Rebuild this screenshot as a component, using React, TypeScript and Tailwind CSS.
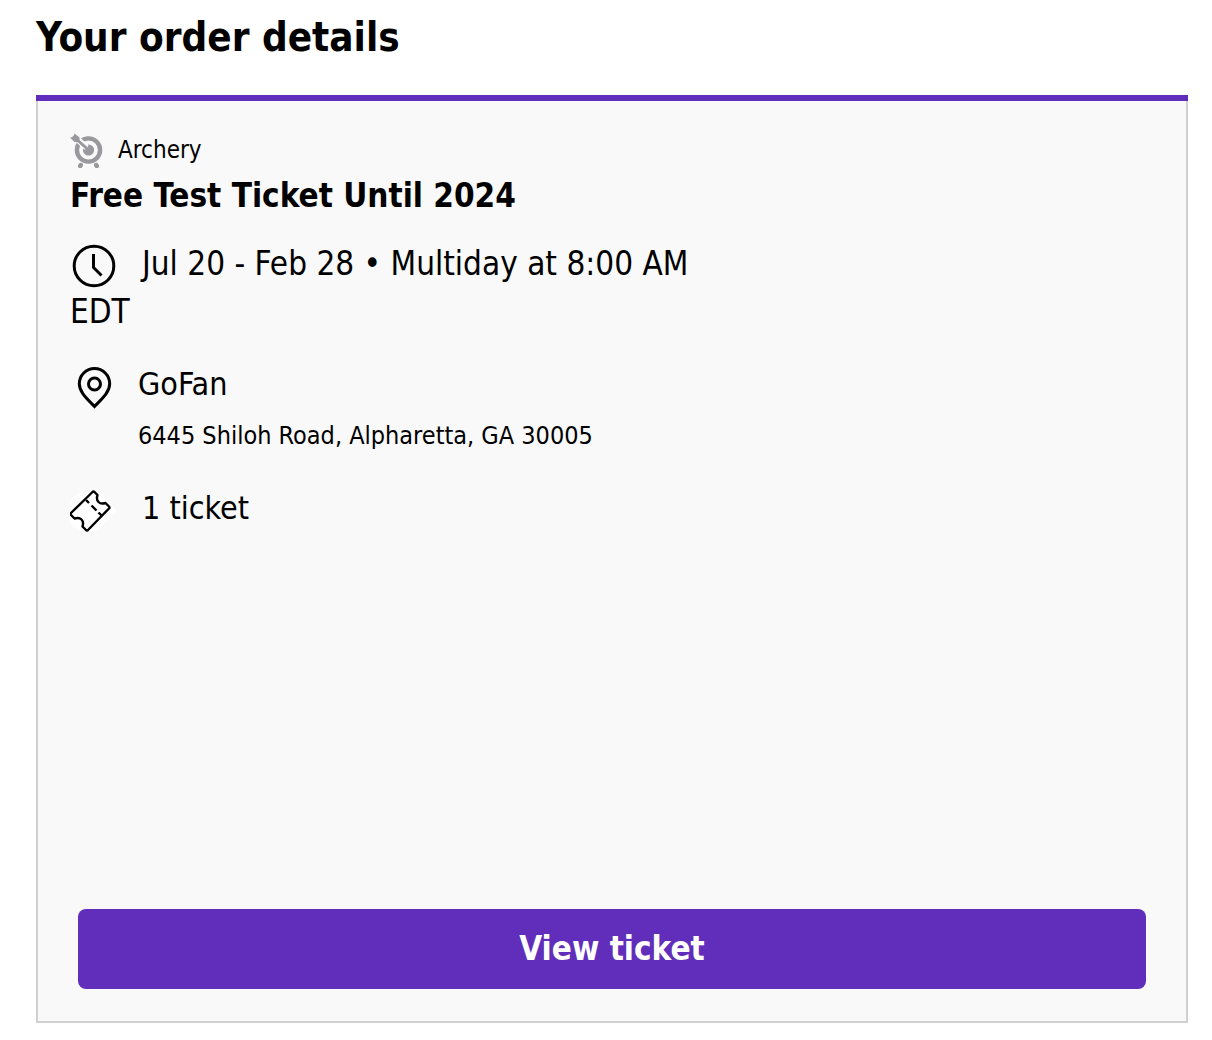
import type { ReactNode } from "react";

function TargetIcon() {
  return (
    <svg className="size-9 shrink-0" viewBox="0 0 36 36" fill="none" aria-hidden="true">
      <path d="M10.800 33l-.6 1M26.200 33l.6 1" stroke="#98989d" strokeWidth="4.400" strokeLinecap="round" />
      <circle cx="18.500" cy="18" r="11.600" stroke="#98989d" strokeWidth="4.400" />
      <circle cx="18.500" cy="18" r="5.600" fill="#98989d" />
      <path d="M6 6l10.500 9.500" stroke="#f9f9f9" strokeWidth="6.400" />
      <path d="M18.500 18l-3-5.500M18.500 18l-5.500-3" stroke="#f9f9f9" strokeWidth="1.600" />
      <path d="M4 5l14.500 13" stroke="#98989d" strokeWidth="3" strokeLinecap="round" />
      <path d="M0 5.500l3.500-.5L4.500 1.500l5 4v5L4.500 10z" fill="#98989d" />
    </svg>
  );
}

function ClockIcon() {
  return (
    <svg className="size-12 shrink-0" viewBox="0 0 48 48" fill="none" stroke="#000" strokeWidth="3" aria-hidden="true">
      <circle cx="24" cy="24" r="19.800" />
      <path d="M23.500 12v13.500l8 8" />
    </svg>
  );
}

function PinIcon() {
  return (
    <svg className="h-12 w-11 shrink-0" viewBox="0 0 44 48" fill="none" stroke="#000" strokeWidth="3" aria-hidden="true">
      <path d="M24.500 42.500C18 35.500 9.300 28.500 9.300 19.700a15.200 15.200 0 0 1 30.400 0C39.700 28.500 31 35.500 24.500 42.500z" />
      <circle cx="24.500" cy="20" r="6" />
    </svg>
  );
}

function TicketIcon() {
  return (
    <svg className="size-12 shrink-0" viewBox="0 0 48 48" fill="none" aria-hidden="true">
      <path d="M0 12L10 4h20l17 19-20 20H9L0 36z" fill="#fff" />
      <path
        d="M22.500 4a1.500 1.500 0 0 1 2 0l3 3c-1 3-.5 5.500 1 7s4 2 7 1l3.500 3.500a1.500 1.500 0 0 1 0 2L18 42a1.500 1.500 0 0 1-2 0L12.500 38.500c1-3 .5-5.500-1-7s-4-2-7-1L1 27a1.500 1.500 0 0 1 0-2z"
        stroke="#000"
        strokeWidth="2.400"
        strokeLinejoin="round"
      />
      <path d="M16 12l3 3M21.500 17.500l5 5M28.500 24.500l3 3" stroke="#000" strokeWidth="2.400" />
    </svg>
  );
}

function Row({ icon, children }: { icon: ReactNode; children: ReactNode }) {
  return (
    <div className="flex items-start gap-6">
      <span className="mt-1">{icon}</span>
      <div className="min-w-0">{children}</div>
    </div>
  );
}

export default function App() {
  return (
    <main className="min-h-screen bg-white pt-[13px] pr-6 pb-4 pl-9 font-['DejaVu_Sans_Condensed','DejaVu_Sans',sans-serif] text-black">
      <h1 className="text-[40px] leading-[48px] font-bold">Your order details</h1>
      <section className="mt-[34px] border-t-6 border-[#612dbb]">
        <div className="border-x-2 border-b-2 border-[#d0d0d0] bg-[#f9f9f9] p-8 pt-[31px]">
          <div className="flex min-h-[777px] flex-col gap-6">
            <header>
              <p className="flex items-center gap-3 text-2xl leading-9">
                <TargetIcon />
                Archery
              </p>
              <h2 className="mt-2 text-[33px] leading-10 font-bold">Free Test Ticket Until 2024</h2>
            </header>
            <p className="max-w-[640px] text-[33px] leading-[48px]">
              <span className="-my-2 mr-6 inline-block align-middle">
                <ClockIcon />
              </span>
              Jul 20 - Feb 28 • Multiday at 8:00 AM EDT
            </p>
            <Row icon={<PinIcon />}>
              <p className="text-[32px] leading-[48px]">GoFan</p>
              <p className="mt-1 text-[25px] leading-[48px]">6445 Shiloh Road, Alpharetta, GA 30005</p>
            </Row>
            <Row icon={<TicketIcon />}>
              <p className="text-[32px] leading-[48px]">1 ticket</p>
            </Row>
          </div>
          <div className="px-2">
            <button type="button" className="h-20 w-full cursor-pointer rounded-lg bg-[#612dbb] text-[33px] font-bold text-white">
              View ticket
            </button>
          </div>
        </div>
      </section>
    </main>
  );
}
